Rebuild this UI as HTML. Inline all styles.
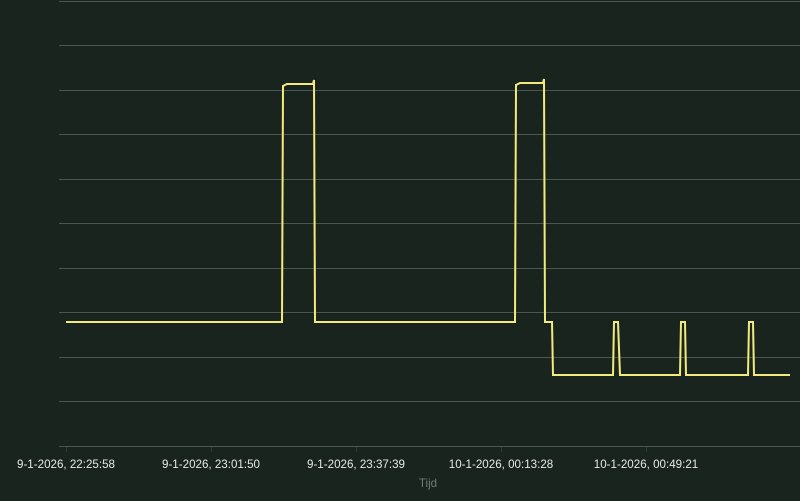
<!DOCTYPE html>
<html><head><style>
html,body{margin:0;padding:0;background:#19241f;width:800px;height:501px;overflow:hidden}
</style></head><body>
<svg width="800" height="501" xmlns="http://www.w3.org/2000/svg" style="display:block">
<rect width="800" height="501" fill="#19241f"/>
<g stroke="#4a5751" stroke-width="1">
<line x1="59" x2="800" y1="1.5" y2="1.5"/>
<line x1="59" x2="800" y1="45.5" y2="45.5"/>
<line x1="59" x2="800" y1="90.5" y2="90.5"/>
<line x1="59" x2="800" y1="134.5" y2="134.5"/>
<line x1="59" x2="800" y1="179.5" y2="179.5"/>
<line x1="59" x2="800" y1="223.5" y2="223.5"/>
<line x1="59" x2="800" y1="268.5" y2="268.5"/>
<line x1="59" x2="800" y1="312.5" y2="312.5"/>
<line x1="59" x2="800" y1="357.5" y2="357.5"/>
<line x1="59" x2="800" y1="401.5" y2="401.5"/>
<line x1="59" x2="800" y1="446.5" y2="446.5"/>
</g>
<g stroke="#2e3a35"><line x1="66.5" x2="66.5" y1="447" y2="452"/><line x1="211.5" x2="211.5" y1="447" y2="452"/><line x1="356.5" x2="356.5" y1="447" y2="452"/><line x1="501.5" x2="501.5" y1="447" y2="452"/><line x1="646.5" x2="646.5" y1="447" y2="452"/></g>
<polyline fill="none" stroke="#f3ea7c" stroke-width="2" points="66,322 282,322 283,86 287,84 313,84 314,80 315,322 515,322 516,85 520,83 543,83 544,79 545,322 552,322 553,375 613,375 614,322 618,322 620,375 680,375 681,322 685,322 686,375 748,375 749,322 753,322 754,375 790,375"/>
<g fill="#e8e8e2" font-family="Liberation Sans, sans-serif" font-size="11.6" text-anchor="middle">
<text x="66" y="468">9-1-2026, 22:25:58</text>
<text x="211" y="468">9-1-2026, 23:01:50</text>
<text x="356" y="468">9-1-2026, 23:37:39</text>
<text x="501" y="468">10-1-2026, 00:13:28</text>
<text x="646" y="468">10-1-2026, 00:49:21</text>
</g>
<text x="428" y="487" fill="#6f7a74" font-family="Liberation Sans, sans-serif" font-size="11.6" text-anchor="middle">Tijd</text>
</svg>
</body></html>
